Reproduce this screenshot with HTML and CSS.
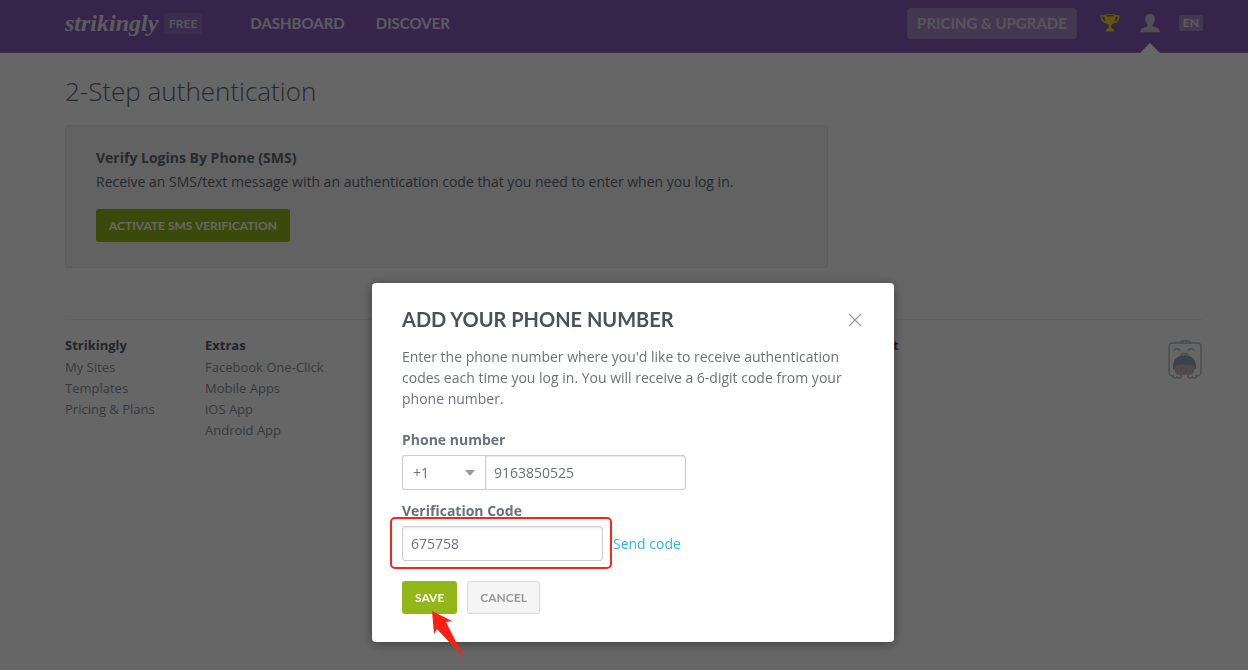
FILE: index.html
```html
<!DOCTYPE html>
<html lang="en">

<head>
  <meta charset="UTF-8">
  <meta name="viewport" content="width=device-width, initial-scale=1.0">
  <title>2-Step authentication</title>
  <link rel="stylesheet" href="styles.css">
</head>

<body>
  <header class="topbar">
    <a href="#" class="logo">strikingly</a>
    <a href="#" class="plan">FREE</a>
    <nav class="main-nav">
      <a href="#">DASHBOARD</a>
      <a href="#">DISCOVER</a>
    </nav>
    <div class="tools">
      <a href="#" class="upgrade">PRICING &amp; UPGRADE</a>
      <a href="#" class="trophy" aria-label="Rewards">
        <svg width="20" height="20" viewBox="0 0 20 20">
          <path d="M5 3H1.200C1.200 7 3.500 9.500 7.500 10M15 3h3.800C18.800 7 16.500 9.500 12.500 10" fill="none" stroke="#f2d91c" stroke-width="1.600" />
          <path d="M4.500 2.500c0 5 1.500 8 4.300 9.500v3c-1.800.3-3 1.200-3 3.500h8.400c0-2.300-1.200-3.200-3-3.500v-3c2.800-1.500 4.300-4.500 4.300-9.500z" fill="#f2d91c" />
          <ellipse cx="10" cy="2.500" rx="5.500" ry="1.500" fill="#f2d91c" />
          <ellipse cx="10" cy="2.700" rx="4" ry=".7" fill="#875abb" />
        </svg>
      </a>
      <a href="#" class="account" aria-label="Account">
        <svg width="20" height="20" viewBox="0 0 20 20">
          <path d="M10 1c3.200 0 4.800 2 4.800 5.200 0 2.300-1 4.300-2.300 5.400-.2 1.500.2 2 1.500 2.400 3.500 1 5.700 1.500 5.700 5.200H.3c0-3.700 2.200-4.200 5.700-5.200 1.300-.4 1.700-.9 1.500-2.400-1.300-1.100-2.300-3.100-2.300-5.400C5.200 3 6.800 1 10 1z" fill="#cdc2da" />
        </svg>
      </a>
      <a href="#" class="lang">EN</a>
    </div>
  </header>

  <main class="content">
    <h1>2-Step authentication</h1>
    <section class="panel">
      <h2>Verify Logins By Phone (SMS)</h2>
      <p>Receive an SMS/text message with an authentication code that you need to enter when you log in.</p>
      <button type="button" class="btn btn-green">ACTIVATE SMS VERIFICATION</button>
    </section>
  </main>

  <footer class="footer">
    <div class="footer-col">
      <h3>Strikingly</h3>
      <a href="#">My Sites</a>
      <a href="#">Templates</a>
      <a href="#">Pricing &amp; Plans</a>
    </div>
    <div class="footer-col">
      <h3>Extras</h3>
      <a href="#">Facebook One-Click</a>
      <a href="#">Mobile Apps</a>
      <a href="#">iOS App</a>
      <a href="#">Android App</a>
    </div>
    <div class="footer-col footer-support">
      <h3>Support</h3>
      <a href="#">Service</a>
    </div>
    <svg class="mascot" width="34" height="40" viewBox="0 0 34 40">
      <g fill="none" stroke="#b6c3c9" stroke-width="1.500" stroke-linecap="round">
        <path d="M5 36c-2.500 0-4-1.500-4-4V7c0-2.500 1.500-4 4-4h24c2.500 0 4 1.500 4 4v25c0 2.500-1.500 4-4 4" />
        <path d="M12 3c1-2 2-2 3-2 1-1 3-1 4 0 2 0 3 .5 4 2M15 1v2M18 1v2M21 1v2" />
        <path d="M6 10c2-1.500 4-1.500 6 0M20 10c2-1.500 4-1.500 6 0M13 15c1-2 3-2 4-1 1-1 3 0 3 1" />
      </g>
      <path d="M5 26c0-7 5-11 11.500-11S28 19 28 26v3H5z" fill="#8fa9b7" />
      <path d="M6 29c1-4 5-5 10-4 5-1 10 0 11 3-1 5-3 7-6 7H11c-3 0-4-3-5-6z" fill="#c7bab9" />
      <path d="M14 27c-1 2-2 4-1 6M20 27c-1 2-3 3-2 6" fill="none" stroke="#a9a9aa" />
      <path d="M5 35c0 4 4 4 4 1 1 3 5 3 4-1M20 35c0 4 4 4 4 1 1 3 5 3 4-1" fill="none" stroke="#b6c3c9" stroke-width="1.500" />
    </svg>
  </footer>

  <div class="overlay">
    <form class="modal" role="dialog" aria-labelledby="modal-title">
      <div class="modal-head">
        <h2 id="modal-title">ADD YOUR PHONE NUMBER</h2>
        <button type="button" class="close" aria-label="Close">
          <svg width="14" height="14" viewBox="0 0 14 14">
            <path d="M1 1l12 12M13 1L1 13" stroke="#999" stroke-width="1.200" />
          </svg>
        </button>
      </div>
      <p>Enter the phone number where you'd like to receive authentication codes each time you log in. You will receive a 6-digit code from your phone number.</p>

      <label for="phone">Phone number</label>
      <div class="phone-row">
        <select class="country" aria-label="Country code">
          <option>+1</option>
        </select>
        <input type="tel" id="phone" class="phone" value="9163850525">
      </div>

      <label for="code">Verification Code</label>
      <div class="code-row">
        <span class="code-box"><input type="text" id="code" value="675758"></span>
        <a href="#">Send code</a>
      </div>

      <div class="actions">
        <button type="submit" class="btn btn-green save">SAVE
          <svg class="arrow" width="34" height="48" viewBox="0 0 34 48">
            <path d="M0 0l20 10-6 1 18 36L5 18l-3 5z" fill="#ff1e12" />
          </svg>
        </button>
        <button type="button" class="btn btn-grey">CANCEL</button>
      </div>
    </form>
  </div>
</body>

</html>
```
FILE: styles.css
```css
* {
  box-sizing: border-box;
}

body {
  margin: 0;
  background: #fff;
  color: #636972;
  font-family: "Open Sans", sans-serif;
  font-size: 14px;
  line-height: 21px;
}

a {
  color: inherit;
  text-decoration: none;
}

h1,
h2,
h3,
p {
  margin: 0;
}

input,
select,
button {
  font-family: inherit;
  font-size: 14px;
}

svg {
  display: block;
}

/* Top bar */
.topbar {
  display: flex;
  align-items: center;
  height: 53px;
  padding: 0 45px 6px 65px;
  background: #875abb;
  border-bottom: 1px solid #9b78c6;
  color: #e8e4ee;
  font-family: Lato, sans-serif;
  font-weight: bold;
  font-size: 15px;
}

.logo {
  width: 99px;
  font-family: "Liberation Serif", serif;
  font-style: italic;
  font-size: 24px;
}

.plan {
  padding: 0 5px;
  border-radius: 3px;
  background: #9672c1;
  font-size: 12px;
  color: #dcd3e6;
}

.main-nav {
  display: flex;
  gap: 31px;
  margin-left: 48px;
}

.tools {
  display: flex;
  align-items: center;
  margin-left: auto;
}

.upgrade {
  padding: 5px 10px;
  border-radius: 4px;
  background: #a78cc8;
  color: #dcd3e6;
}

.trophy {
  margin-left: 23px;
}

.account {
  position: relative;
  margin-left: 20px;
}

.account::after {
  content: "";
  position: absolute;
  top: 30px;
  left: 0;
  border: 10px solid transparent;
  border-top: none;
  border-bottom-color: #fff;
}

.lang {
  padding: 0 4px;
  margin-left: 19px;
  border-radius: 2px;
  background: #a78cc8;
  font-size: 12px;
  line-height: 16px;
}

/* Page */
.content {
  padding: 21px 45px 0 65px;
}

h1 {
  font-size: 26px;
  font-weight: 300;
  line-height: 34px;
}

.panel {
  max-width: 763px;
  margin-top: 17px;
  padding: 21px 30px 25px;
  border: 1px solid #e8e8e8;
  border-radius: 3px;
  background: #f4f4f4;
}

.panel h2 {
  font-size: 14px;
}

.panel p {
  margin: 3px 0 17px;
}

.btn {
  display: block;
  height: 33px;
  padding: 0 12px;
  border: 1px solid transparent;
  border-radius: 3px;
  font-family: Lato, sans-serif;
  font-weight: bold;
  font-size: 12px;
}

.btn-green {
  background: #93b719;
  color: #fff;
}

.btn-grey {
  background: #f5f5f5;
  border-color: #d9d9d9;
  color: #999;
}

/* Footer */
.footer {
  display: flex;
  margin: 51px 46px 0 65px;
  padding-top: 15px;
  border-top: 1px solid #f0f0f0;
  color: #8b9199;
  font-size: 13px;
}

.footer-col {
  width: 140px;
}

.footer-col h3 {
  margin-bottom: 1px;
  color: #555b66;
  font-size: 13px;
}

.footer-col a {
  display: block;
}

.footer-support {
  margin-left: auto;
  width: 150px;
}

.mascot {
  margin: 5px 0 0 171px;
}

/* Modal */
.overlay {
  position: fixed;
  inset: 0;
  display: flex;
  justify-content: center;
  align-items: flex-start;
  padding: 283px 0 0 18px;
  background: rgba(0, 0, 0, 0.6);
}

.modal {
  width: 522px;
  padding: 25px 30px 28px;
  border-radius: 4px;
  background: #fff;
  box-shadow: 0 2px 12px rgba(0, 0, 0, 0.4);
  color: #6b717b;
}

.modal-head {
  display: flex;
  align-items: center;
  justify-content: space-between;
  margin-bottom: 15px;
}

.modal-head h2 {
  color: #4b5159;
  font-family: Lato, sans-serif;
  font-size: 20px;
  line-height: 23px;
}

.close {
  padding: 0;
  margin-right: 2px;
  border: none;
  background: none;
}

.modal p {
  margin-bottom: 20px;
}

.modal label {
  display: block;
  margin-bottom: 5px;
  font-weight: bold;
}

.modal input,
.country {
  height: 35px;
  padding: 0 8px;
  border: 1px solid #ccc;
  border-radius: 3px;
  background: #fff;
  color: #6b717b;
}

.modal input {
  width: 201px;
  box-shadow: inset 0 1px 2px rgba(0, 0, 0, 0.1);
}

.phone-row {
  display: flex;
  margin-bottom: 10px;
}

.country {
  width: 83px;
  padding: 0 10px;
  border-right: none;
  border-radius: 3px 0 0 3px;
  appearance: none;
  background: url("data:image/svg+xml,%3Csvg xmlns='http://www.w3.org/2000/svg' width='10' height='6'%3E%3Cpath d='M0 0h10L5 6z' fill='%23999'/%3E%3C/svg%3E") no-repeat right 10px center;
}

.modal .phone {
  border-radius: 0 3px 3px 0;
}

.code-row {
  display: flex;
  align-items: center;
  gap: 10px;
  margin-bottom: 20px;
}

.code-row a {
  color: #2eb5ea;
}

.code-box {
  position: relative;
}

.code-box input {
  display: block;
}

/* red frame around the code field */
.code-box::after {
  content: "";
  position: absolute;
  inset: -9px -9px -8px -12px;
  border: 2px solid #f5271d;
  border-radius: 5px;
  pointer-events: none;
}

.actions {
  display: flex;
  gap: 10px;
}

.save {
  position: relative;
}

.arrow {
  position: absolute;
  top: 29px;
  left: 29px;
}
```
